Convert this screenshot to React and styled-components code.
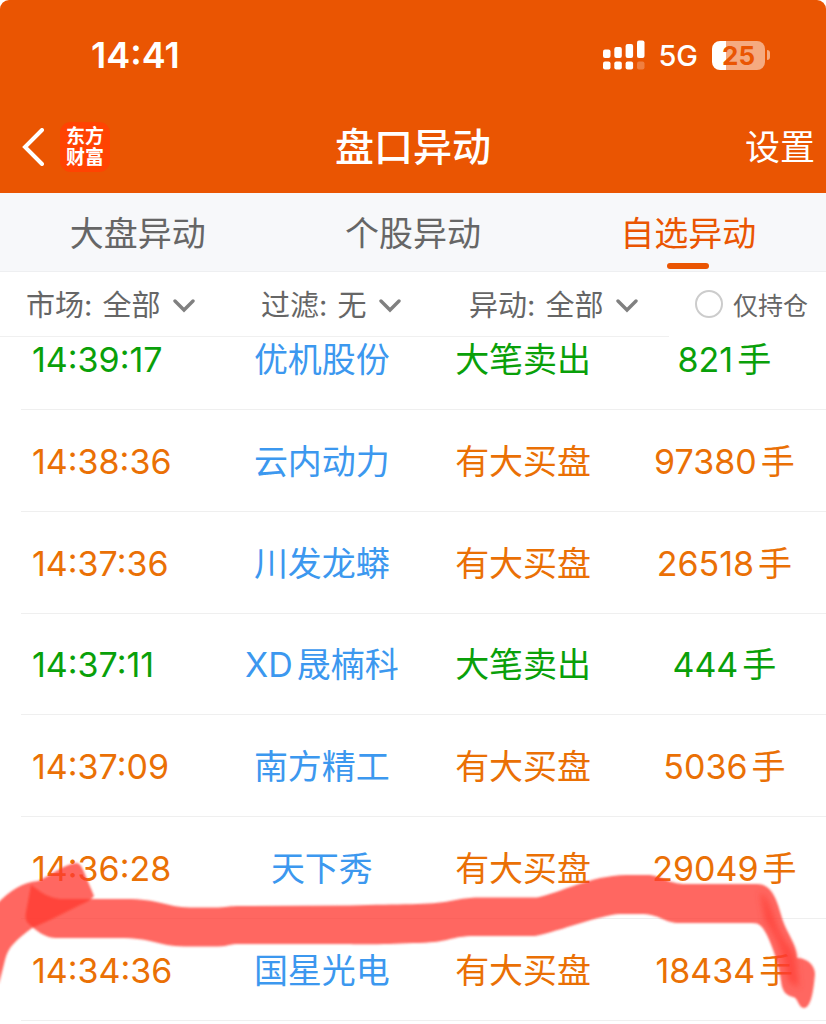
import React, { useState } from 'react';
import styled, { createGlobalStyle } from 'styled-components';

const GlobalStyle = createGlobalStyle`
  * {
    box-sizing: border-box;
  }

  body {
    margin: 0;
    background: #ffffff;
    font-family: Inter, "Noto Sans CJK SC", sans-serif;
  }

  button, select, input {
    font: inherit;
    color: inherit;
    margin: 0;
    padding: 0;
    border: none;
    background: none;
  }
`;

const Page = styled.div`
  position: relative;
  overflow: hidden;
  min-height: 100vh;
`;

const Header = styled.header`
  background: #ea5502;
  color: #ffffff;
  border-radius: 9px 9px 0 0;
  padding-bottom: 9px;
`;

const StatusBar = styled.div`
  display: flex;
  align-items: center;
  height: 110px;
  padding: 0 56px 0 91px;
`;

const Clock = styled.span`
  flex: 1;
  font-size: 36px;
  font-weight: 600;
`;

const Network = styled.span`
  margin: 0 14px 0 13px;
  font-size: 29px;
  font-weight: 500;
`;

const Battery = styled.span`
  width: 53px;
  height: 29px;
  border-radius: 8px;
  background: linear-gradient(to right, #ffffff 14px, #f5aa80 14px);
  color: #ea5502;
  font-size: 26px;
  font-weight: 700;
  line-height: 29px;
  text-align: center;
`;

const BatteryTip = styled.span`
  width: 3px;
  height: 10px;
  margin-left: 2px;
  border-radius: 0 4px 4px 0;
  background: #f5aa80;
`;

const NavBar = styled.div`
  display: grid;
  grid-template-columns: 1fr auto 1fr;
  align-items: center;
  height: 74px;
  padding: 0 11px;
`;

const NavLeft = styled.div`
  display: flex;
  align-items: center;
  gap: 16px;
  padding-left: 11px;
`;

const IconButton = styled.button`
  display: flex;
`;

const Logo = styled.span`
  display: flex;
  align-items: center;
  justify-content: center;
  width: 50px;
  height: 50px;
  border-radius: 11px;
  background: #ff4302;
  font-size: 19px;
  font-weight: 700;
  line-height: 21px;
  text-align: center;
`;

const Title = styled.h1`
  margin: 0;
  font-size: 39px;
  font-weight: 500;
  line-height: 50px;
`;

const SettingsButton = styled.button`
  justify-self: end;
  font-size: 35px;
  line-height: 50px;
`;

const Tabs = styled.div`
  display: grid;
  grid-template-columns: repeat(3, 1fr);
  height: 79px;
  background: #f7f8fa;
  border-bottom: 1px solid #eeeff1;
`;

const Tab = styled.button`
  display: flex;
  flex-direction: column;
  align-items: center;
  padding-top: 16px;
  color: ${props => (props.$active ? '#ea5502' : '#666666')};
  font-size: 34px;
  line-height: 50px;

  &::after {
    content: "";
    width: 42px;
    height: 6px;
    margin-top: 4px;
    border-radius: 3px;
    background: ${props => (props.$active ? '#ea5502' : 'transparent')};
  }
`;

const Filters = styled.div`
  position: relative;
  display: grid;
  grid-template-columns: 235fr 208fr 226fr 157fr;
  height: 65px;
  background: #ffffff;
  color: #666666;
`;

const Filter = styled.label`
  display: flex;
  align-items: center;
  padding: 4px 0 0 26px;
  border-bottom: 1px solid #f0f0f0;
  font-size: 29px;
  line-height: 40px;
  white-space: nowrap;
`;

const Select = styled.select`
  appearance: none;
  width: ${props => props.$chars}em;
  margin: 0 13px 0 10px;
  outline: none;
`;

const HoldingsOnly = styled.label`
  display: flex;
  align-items: center;
  gap: 10px;
  padding: 0 0 2px 26px;
  font-size: 25px;
  white-space: nowrap;
`;

const Round = styled.input`
  appearance: none;
  width: 28px;
  height: 28px;
  border: 2px solid #cccccc;
  border-radius: 50%;

  &:checked {
    border: 8px solid #ea5502;
  }
`;

// The first row sits partly under the filter bar, as if scrolled.
const List = styled.table`
  width: calc(100% - 21px);
  height: calc(100vh - 311px);
  margin: -29px 0 0 21px;
  border-collapse: separate;
  border-spacing: 0;
  table-layout: fixed;
  font-size: 34px;
  line-height: 50px;
  text-align: center;
`;

const Row = styled.tr`
  color: ${props => (props.$sell ? '#09a009' : '#ea7005')};
`;

const Cell = styled.td`
  padding: 3px 2px 0 0;
  border-bottom: 1px solid #efefef;
  white-space: nowrap;
`;

const TimeCell = styled(Cell)`
  padding-left: 11px;
  text-align: left;
`;

const NameCell = styled(Cell)`
  color: #3c98ef;
`;

const Spaced = styled.span`
  margin-left: 4px;
`;

const Marker = styled.svg`
  position: absolute;
  top: 0;
  left: 0;
  width: 100%;
  pointer-events: none;
`;

const tabs = ['大盘异动', '个股异动', '自选异动'];

const filters = [
    { label: '市场', value: '全部' },
    { label: '过滤', value: '无' },
    { label: '异动', value: '全部' },
];

const rows = [
    { time: '14:39:17', name: '优机股份', sell: true, volume: 821 },
    { time: '14:38:36', name: '云内动力', volume: 97380 },
    { time: '14:37:36', name: '川发龙蟒', volume: 26518 },
    { time: '14:37:11', prefix: 'XD', name: '晟楠科', sell: true, volume: 444 },
    { time: '14:37:09', name: '南方精工', volume: 5036 },
    { time: '14:36:28', name: '天下秀', volume: 29049 },
    { time: '14:34:36', name: '国星光电', volume: 18434 },
];

const Signal = () => (
    <svg width="42" height="30" viewBox="0 0 42 30" fill="#fff" aria-hidden="true">
        <rect x="0" y="9.5" width="7.5" height="8.5" rx="2" />
        <rect x="11.3" y="7" width="7.5" height="11" rx="2" />
        <rect x="22.6" y="4" width="7.5" height="14" rx="2" />
        <rect x="34" y="0.5" width="7.5" height="17.5" rx="2" />
        <rect x="0" y="21.5" width="7.5" height="8" rx="2" />
        <rect x="11.3" y="21.5" width="7.5" height="8" rx="2" />
        <rect x="22.6" y="21.5" width="7.5" height="8" rx="2" />
        <rect x="34" y="21.5" width="7.5" height="8" rx="2" opacity="0.25" />
    </svg>
);

const Chevron = () => (
    <svg width="22" height="14" viewBox="0 0 22 14" fill="none" stroke="#808080" strokeWidth="3.4" aria-hidden="true">
        <path d="M2 2l9 9 9-9" strokeLinecap="round" />
    </svg>
);

const MarkerStroke = () => (
    <Marker viewBox="0 0 826 1024" fill="#ff3b30" aria-hidden="true">
        <defs>
            <filter id="soft" x="-5%" y="-5%" width="110%" height="110%">
                <feGaussianBlur stdDeviation="1" />
            </filter>
            <filter id="softer" x="-20%" y="-20%" width="140%" height="140%">
                <feGaussianBlur stdDeviation="3" />
            </filter>
        </defs>
        <g filter="url(#soft)">
            <path
                opacity="0.77"
                d="M31 885C38 889 44 897 60 899H125C160 899 165 907 190 907.500H218C230 907 228 906 240 906L350 905.500C400 904 430 905 450 901Q462 898 475 897.500H537C560 893 590 875.500 626 875H648C660 875 668 884 686 884H757C774 884 778 905 783 921C787 933 797 945 797 958C808 958 815 966 815 974C814 985 812 1008 804 1008C798 1008 798 997 793 997C786 995 782 992 781 981C779 965 773 948 767 935C762 926 760 923 752 923H677C663 922 660 914 640 914H620C600 915 560 931 535 936H475C450 936 450 943 413 943C380 945 350 944 345 944H240C228 944 230 946 218 946.500H185C155 946 155 938 118 938H55C44 937 37 931 30 925Q24 921 26 912Z"
            />
            <path
                opacity="0.77"
                d="M-5 906C8 892 22 882 38 881C50 876 64 864 77 863Q81 864 84 872L94 896Q90 901 80 905L50 920L32 928C16 940 8 947 5 960L-1 984Z"
            />
        </g>
        <path
            filter="url(#softer)"
            opacity="0.65"
            d="M760 892C769 897 773 915 780 932C786 944 794 949 796 959L799 988L788 981C784 955 776 935 765 921Z"
        />
    </Marker>
);

const App = () => {
    const [activeTab, setActiveTab] = useState('自选异动');

    return (
        <Page>
            <GlobalStyle />
            <Header>
                <StatusBar>
                    <Clock>14:41</Clock>
                    <Signal />
                    <Network>5G</Network>
                    <Battery>25</Battery>
                    <BatteryTip />
                </StatusBar>
                <NavBar>
                    <NavLeft>
                        <IconButton aria-label="返回">
                            <svg width="22" height="38" viewBox="0 0 22 38" fill="none" stroke="#fff" strokeWidth="4">
                                <path d="M20 2L3 19l17 17" strokeLinecap="round" />
                            </svg>
                        </IconButton>
                        <Logo>东方<br />财富</Logo>
                    </NavLeft>
                    <Title>盘口异动</Title>
                    <SettingsButton>设置</SettingsButton>
                </NavBar>
            </Header>
            <Tabs role="tablist">
                {tabs.map((tab) => (
                    <Tab
                        key={tab}
                        role="tab"
                        aria-selected={tab === activeTab}
                        $active={tab === activeTab}
                        onClick={() => setActiveTab(tab)}
                    >
                        {tab}
                    </Tab>
                ))}
            </Tabs>
            <Filters>
                {filters.map((item) => (
                    <Filter key={item.label}>
                        {item.label}:
                        <Select $chars={item.value.length}>
                            <option>{item.value}</option>
                        </Select>
                        <Chevron />
                    </Filter>
                ))}
                <HoldingsOnly>
                    <Round type="checkbox" />
                    仅持仓
                </HoldingsOnly>
            </Filters>
            <List>
                <tbody>
                    {rows.map((row) => (
                        <Row key={row.time} $sell={row.sell}>
                            <TimeCell>{row.time}</TimeCell>
                            <NameCell>
                                {row.prefix}
                                {row.prefix ? <Spaced>{row.name}</Spaced> : row.name}
                            </NameCell>
                            <Cell>{row.sell ? '大笔卖出' : '有大买盘'}</Cell>
                            <Cell>{row.volume}<Spaced>手</Spaced></Cell>
                        </Row>
                    ))}
                </tbody>
            </List>
            <MarkerStroke />
        </Page>
    );
};

export default App;
